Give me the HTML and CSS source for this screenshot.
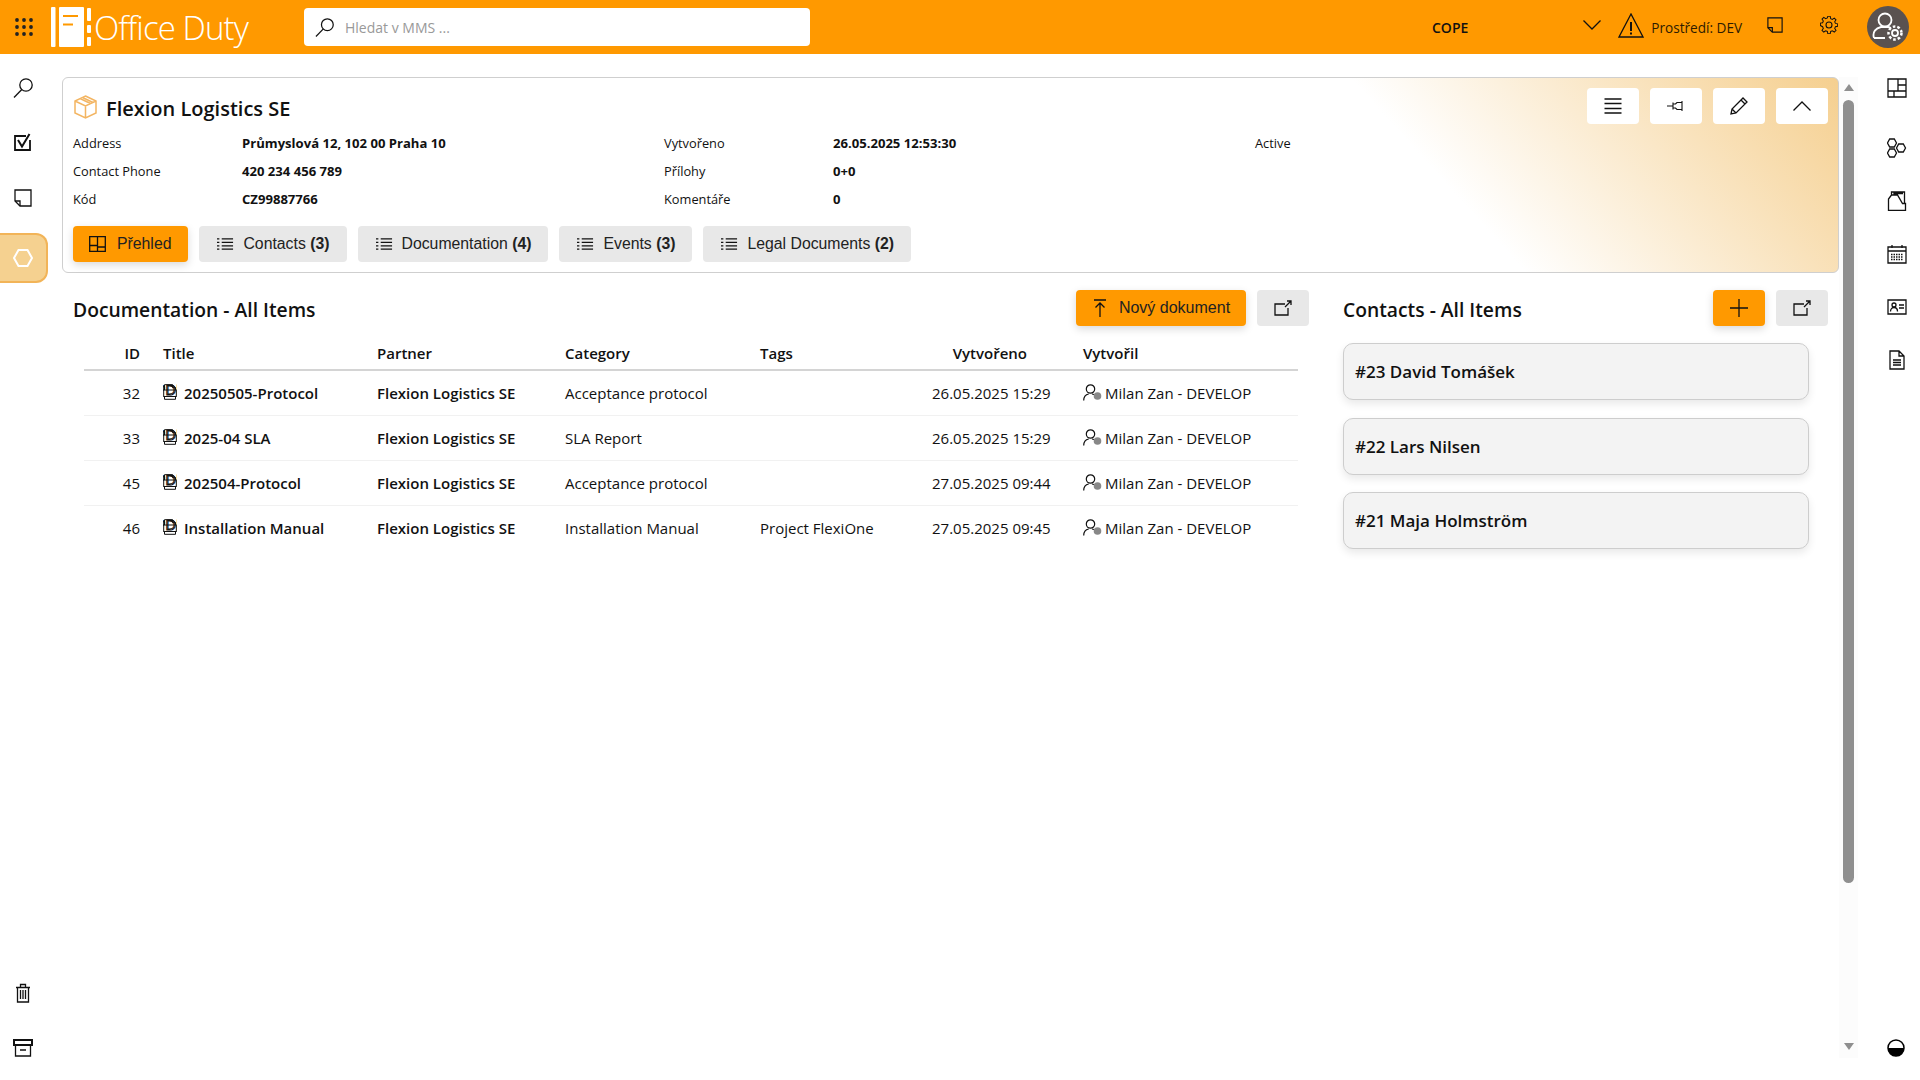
FILE: index.html
```html
<!DOCTYPE html>
<html lang="en">
<head>
    <meta charset="UTF-8">
    <meta name="viewport" content="width=device-width, initial-scale=1.0">
    <title>Office Duty | Flexion Logistics SE</title>
    <link rel="stylesheet" href="styles.css">
</head>
<body>
    <!-- Shared icons -->
    <svg class="sprite" xmlns="http://www.w3.org/2000/svg">
        <symbol id="i-search" viewBox="0 0 20 20"><circle cx="13" cy="7" r="6.2"/><path d="M8.8 11.5 1 19.5"/></symbol>
        <symbol id="i-note" viewBox="0 0 18 18"><path d="M1 1h16v16H6l-5-5z"/><path d="M1 12h5v5"/></symbol>
        <symbol id="i-list" viewBox="0 0 18 14"><path d="M5 1.500h12M5 5.200h12M5 8.900h12M5 12.500h12"/><path d="M0 1.500h2.500M0 5.200h2.500M0 8.900h2.500M0 12.500h2.500"/></symbol>
        <symbol id="i-open" viewBox="0 0 18 16"><path d="M11 4H1v11h13V8"/><path d="M11 7l6-6M13 1h4v4"/></symbol>
        <symbol id="i-pdf" viewBox="0 0 14 16"><path d="M1.500 6V.7h8l3 3V6M1.500 12.500v2.800h11v-2.800"/><path d="M9.500.7v3h3"/><rect x=".7" y="6" width="12.600" height="6.500"/><text x="7" y="11.200" text-anchor="middle">PDF</text></symbol>
        <symbol id="i-user" viewBox="0 0 19 17"><circle cx="7.500" cy="5" r="4.200"/><path d="M.7 16.500c0-4 2.300-6 5-6.500M9 10l2 .5"/><circle class="solid" cx="14.500" cy="12" r="3.800"/></symbol>
    </svg>

    <header class="topbar">
        <svg class="apps" viewBox="0 0 18 18"><g><circle cx="2" cy="2" r="1.900"/><circle cx="9" cy="2" r="1.900"/><circle cx="16" cy="2" r="1.900"/><circle cx="2" cy="9" r="1.900"/><circle cx="9" cy="9" r="1.900"/><circle cx="16" cy="9" r="1.900"/><circle cx="2" cy="16" r="1.900"/><circle cx="9" cy="16" r="1.900"/><circle cx="16" cy="16" r="1.900"/></g></svg>
        <div class="logo">
            <svg class="logo-mark" viewBox="0 0 40 40">
                <rect x="0" y="0" width="4.500" height="40" rx="1" fill="#fff"/>
                <rect x="8" y="0" width="25" height="40" rx="1" fill="#fff"/>
                <rect x="12" y="8" width="15" height="2" fill="#ff9900"/>
                <rect x="12" y="16.500" width="10" height="2" fill="#ff9900"/>
                <rect x="36" y="1" width="4" height="13" rx="1" fill="#fff"/>
                <rect x="36" y="18" width="4" height="8" rx="1" fill="#fff"/>
                <rect x="36" y="30" width="4" height="9" rx="1" fill="#fff"/>
            </svg>
            <span class="logo-text">Office Duty</span>
        </div>
        <div class="search">
            <svg class="ic search-ic"><use href="#i-search"/></svg>
            <span>Hledat v MMS ...</span>
        </div>
        <span class="company">COPE</span>
        <svg class="ic chevron" viewBox="0 0 18 10"><path d="M.5.500 9 9l8.500-8.500"/></svg>
        <svg class="ic warn" viewBox="0 0 26 25"><path d="M13 1 1 24h24z"/><path d="M13 9v9M13 19.500v2" class="thick"/></svg>
        <span class="env">Prostředí: DEV</span>
        <svg class="ic top-note"><use href="#i-note"/></svg>
        <svg class="ic gear" viewBox="0 0 24 24"><path d="M10.300 1h3.400l.6 3.200 2.300 1 2.700-1.800 2.400 2.400-1.800 2.700 1 2.300 3.100.6v3.400l-3.100.6-1 2.300 1.800 2.700-2.400 2.400-2.700-1.800-2.300 1-.6 3.100h-3.400l-.6-3.100-2.300-1-2.700 1.800-2.400-2.400 1.800-2.700-1-2.300L0 13.800v-3.400l3.100-.6 1-2.300-1.800-2.700 2.400-2.400 2.700 1.800 2.300-1z" transform="translate(.5 -.5) scale(.96)"/><circle cx="12" cy="12" r="4"/></svg>
        <div class="avatar">
            <svg class="ic avatar-ic" viewBox="0 0 32 30"><circle cx="13" cy="8" r="6.500"/><path d="M2 26c-2-6 2-10 7-11h7c1 0 2 .500 3 1M2 26h11"/><circle cx="23" cy="21" r="3" /><circle class="gear-ring" cx="23" cy="21" r="6.500"/></svg>
        </div>
    </header>

    <div class="page">
        <nav class="side-left">
            <svg class="ic nav-search"><use href="#i-search"/></svg>
            <svg class="ic nav-check" viewBox="0 0 18 18"><path class="frame" d="M16 7v10H1V3h11"/><path class="thick" d="M4 7l4 6.500L15.500 1"/></svg>
            <svg class="ic nav-note"><use href="#i-note"/></svg>
            <div class="nav-active">
                <svg class="hex" viewBox="0 0 20 18"><path d="M5.500 1h9l4.500 8-4.500 8h-9L1 9z"/></svg>
            </div>
            <svg class="ic nav-trash" viewBox="0 0 16 20"><path d="M1 4.500h14M5.500 4.500V1.500h5v3M2.500 4.500v14.500h11V4.500"/><path d="M5.500 7v9M8 7v9M10.500 7v9"/></svg>
            <svg class="ic nav-box" viewBox="0 0 20 18"><path class="thick" d="M1 1h18v5H1z"/><path d="M2.500 6v11h15V6M7 11h6"/></svg>
        </nav>

        <main class="content">
            <section class="card">
                <div class="card-head">
                    <h1 class="card-title">
                        <svg class="ic box-ic" viewBox="0 0 23 24"><path d="M11.500 1 22 6v12l-10.500 5L1 18V6zM1 6l10.500 5L22 6M11.500 11v12M6 3.500l10.500 5M8.500 2.500l10.500 5"/></svg>
                        Flexion Logistics SE
                    </h1>
                    <div class="card-actions">
                        <button class="btn-white"><svg class="ic" viewBox="0 0 17 16"><path d="M0 1h17M0 5.500h17M0 10.500h17M0 15h17"/></svg></button>
                        <button class="btn-white"><svg class="ic pin" viewBox="0 0 18 12"><path d="M0 6h6M6 2.500v7M6 4h2.500L10 2.500h5v7h-5L8.500 8H6M15 1v10"/></svg></button>
                        <button class="btn-white"><svg class="ic pencil" viewBox="0 0 18 18"><path d="M1 17l1-5L13 1l4 4L6 16zM2 12l4 4M11 3l4 4"/></svg></button>
                        <button class="btn-white"><svg class="ic" viewBox="0 0 18 10"><path d="M.5 9.500 9 1l8.500 8.500"/></svg></button>
                    </div>
                </div>
                <div class="meta">
                    <span>Address</span><b>Průmyslová 12, 102 00 Praha 10</b>
                    <span>Vytvořeno</span><b>26.05.2025 12:53:30</b>
                    <span>Active</span>
                    <span>Contact Phone</span><b>420 234 456 789</b>
                    <span>Přílohy</span><b>0+0</b>
                    <span></span>
                    <span>Kód</span><b>CZ99887766</b>
                    <span>Komentáře</span><b>0</b>
                    <span></span>
                </div>
                <div class="tabs">
                    <button class="tab tab-active"><svg class="ic" viewBox="0 0 17 16"><path d="M.7.700h15.600v14.600H.7zM8.500.700v14.600M.7 9.500h7.800M8.500 11h7.800"/></svg><span>Přehled</span></button>
                    <button class="tab"><svg class="ic"><use href="#i-list"/></svg><span>Contacts <b>(3)</b></span></button>
                    <button class="tab"><svg class="ic"><use href="#i-list"/></svg><span>Documentation <b>(4)</b></span></button>
                    <button class="tab"><svg class="ic"><use href="#i-list"/></svg><span>Events <b>(3)</b></span></button>
                    <button class="tab"><svg class="ic"><use href="#i-list"/></svg><span>Legal Documents <b>(2)</b></span></button>
                </div>
            </section>

            <div class="columns">
                <section class="docs">
                    <div class="section-head">
                        <h2>Documentation - All Items</h2>
                        <button class="btn-orange btn-new"><svg class="ic" viewBox="0 0 12 18"><path d="M0 1h12M6 4v14M1.500 8.500 6 4l4.500 4.500"/></svg>Nový dokument</button>
                        <button class="btn-gray"><svg class="ic"><use href="#i-open"/></svg></button>
                    </div>
                    <table class="doc-table">
                        <colgroup>
                            <col class="c-id"><col class="c-title"><col class="c-partner"><col class="c-cat"><col class="c-tags"><col class="c-date"><col class="c-user">
                        </colgroup>
                        <thead>
                            <tr>
                                <th class="num">ID</th>
                                <th class="title-cell">Title</th>
                                <th>Partner</th>
                                <th>Category</th>
                                <th>Tags</th>
                                <th class="date-head">Vytvořeno</th>
                                <th class="user-cell">Vytvořil</th>
                            </tr>
                        </thead>
                        <tbody>
                            <tr>
                                <td class="num">32</td>
                                <td class="title-cell"><svg class="ic pdf"><use href="#i-pdf"/></svg><b>20250505-Protocol</b></td>
                                <td><b>Flexion Logistics SE</b></td>
                                <td>Acceptance protocol</td>
                                <td></td>
                                <td class="num date">26.05.2025 15:29</td>
                                <td class="user-cell"><svg class="ic user"><use href="#i-user"/></svg>Milan Zan - DEVELOP</td>
                            </tr>
                            <tr>
                                <td class="num">33</td>
                                <td class="title-cell"><svg class="ic pdf"><use href="#i-pdf"/></svg><b>2025-04 SLA</b></td>
                                <td><b>Flexion Logistics SE</b></td>
                                <td>SLA Report</td>
                                <td></td>
                                <td class="num date">26.05.2025 15:29</td>
                                <td class="user-cell"><svg class="ic user"><use href="#i-user"/></svg>Milan Zan - DEVELOP</td>
                            </tr>
                            <tr>
                                <td class="num">45</td>
                                <td class="title-cell"><svg class="ic pdf"><use href="#i-pdf"/></svg><b>202504-Protocol</b></td>
                                <td><b>Flexion Logistics SE</b></td>
                                <td>Acceptance protocol</td>
                                <td></td>
                                <td class="num date">27.05.2025 09:44</td>
                                <td class="user-cell"><svg class="ic user"><use href="#i-user"/></svg>Milan Zan - DEVELOP</td>
                            </tr>
                            <tr>
                                <td class="num">46</td>
                                <td class="title-cell"><svg class="ic pdf"><use href="#i-pdf"/></svg><b>Installation Manual</b></td>
                                <td><b>Flexion Logistics SE</b></td>
                                <td>Installation Manual</td>
                                <td>Project FlexiOne</td>
                                <td class="num date">27.05.2025 09:45</td>
                                <td class="user-cell"><svg class="ic user"><use href="#i-user"/></svg>Milan Zan - DEVELOP</td>
                            </tr>
                        </tbody>
                    </table>
                </section>

                <section class="contacts">
                    <div class="section-head">
                        <h2>Contacts - All Items</h2>
                        <button class="btn-orange btn-plus"><svg class="ic" viewBox="0 0 18 18"><path d="M9 0v18M0 9h18"/></svg></button>
                        <button class="btn-gray"><svg class="ic"><use href="#i-open"/></svg></button>
                    </div>
                    <div class="contact-card">#23 David Tomášek</div>
                    <div class="contact-card">#22 Lars Nilsen</div>
                    <div class="contact-card">#21 Maja Holmström</div>
                </section>
            </div>
        </main>

        <div class="scrollbar">
            <div class="arrow-up"></div>
            <div class="thumb"></div>
            <div class="arrow-down"></div>
        </div>

        <aside class="side-right">
            <svg class="ic" viewBox="0 0 20 20"><path d="M1 1h18v18H1zM11 1v12M11 7h8M1 13h18M7 13v6"/></svg>
            <svg class="ic" viewBox="0 0 20 20"><path d="M2.700 1h4.600l2.200 4-2.200 4H2.700L.5 5zM2.700 11h4.600l2.200 4-2.200 4H2.700L.5 15zM11.700 6h4.600l2.200 4-2.200 4h-4.600L9.500 10z"/></svg>
            <svg class="ic" viewBox="0 0 20 20"><path d="M1.500 19.500V8l3-4h6l5 8.500h3v7zM4.500 4V1h13v11.500M7 4V2.500h9"/></svg>
            <svg class="ic" viewBox="0 0 20 20"><path d="M1 3h18v16H1zM1 7h18M5 1v3M15 1v3"/><path class="dots" d="M4 10.500h12M4 13h12M4 15.500h12"/></svg>
            <svg class="ic card-ic" viewBox="0 0 20 16"><path d="M1 1h18v14H1z"/><circle cx="7" cy="6" r="2"/><path d="M3.500 12.500c0-2.500 1.500-4 3.500-4s3.500 1.500 3.500 4M12 6h5M12 9h5"/></svg>
            <svg class="ic" viewBox="0 0 20 20"><path d="M3 1h9l5 5v13H3zM12 1v5h5M6 10h8M6 12.500h8M6 15h8"/></svg>
            <svg class="half" viewBox="0 0 18 18"><circle cx="9" cy="9" r="8" fill="#fff" stroke="#000" stroke-width="1.500"/><path d="M1 9h16a8 8 0 0 1-16 0z" fill="#000"/></svg>
        </aside>
    </div>
</body>
</html>
```

FILE: styles.css
```css
:root {
    --orange: #ff9900;
    --text: #111;
    --gray-btn: #e8e8e8;
    --line: #d4d4d4;
}

* {
    margin: 0;
    padding: 0;
    box-sizing: border-box;
}

html, body {
    height: 1080px;
    overflow: hidden;
}

body {
    font-family: 'Open Sans', 'Noto Sans', sans-serif;
    font-size: 15px;
    color: var(--text);
    background: #fff;
}

button {
    border: none;
    cursor: pointer;
}

.sprite {
    display: none;
}

.ic {
    fill: none;
    stroke: #111;
    stroke-width: 1.3;
    flex: none;
}

.ic .thick {
    stroke-width: 2;
}

/* Top bar */
.topbar {
    height: 54px;
    background: var(--orange);
    display: flex;
    align-items: center;
}

.apps {
    width: 18px;
    height: 18px;
    margin-left: 15px;
    fill: #222;
}

.logo {
    display: flex;
    align-items: center;
    margin-left: 18px;
    width: 253px;
}

.logo-mark {
    width: 40px;
    height: 40px;
}

.logo-text {
    margin-left: 3px;
    color: #fff;
    font-size: 33px;
    font-weight: 300;
    letter-spacing: -0.9px;
    white-space: nowrap;
}

.search {
    width: 506px;
    height: 38px;
    background: #fff;
    border-radius: 4px;
    display: flex;
    align-items: center;
    padding-left: 11px;
    color: #999;
    font-size: 14px;
}

.search-ic {
    width: 19px;
    height: 19px;
    margin-right: 11px;
}

.company {
    margin-left: 622px;
    font-size: 14px;
    font-weight: 600;
}

.chevron {
    width: 18px;
    height: 10px;
    margin-left: 115px;
    margin-top: -4px;
}

.warn {
    width: 26px;
    height: 25px;
    margin-left: 17px;
    margin-top: -3px;
}

.env {
    margin-left: 7px;
    font-size: 13.6px;
    color: #2e1c00;
    white-space: nowrap;
}

.top-note {
    width: 16px;
    height: 16px;
    margin-left: 25px;
    margin-top: -4px;
}

.gear {
    width: 18px;
    height: 18px;
    margin-left: 37px;
    margin-top: -4px;
    stroke-width: 1.4;
}

.avatar {
    width: 42px;
    height: 42px;
    margin-left: 29px;
    border-radius: 50%;
    background: #5a5250;
    display: flex;
    align-items: center;
    justify-content: center;
}

.avatar-ic {
    width: 32px;
    height: 30px;
    stroke: #fff;
    stroke-width: 1.8;
}

.avatar-ic .gear-ring {
    stroke-width: 2.5;
    stroke-dasharray: 2.6 2;
}

/* Page frame */
.page {
    display: flex;
    height: 1026px;
}

.side-left {
    width: 62px;
    flex: none;
    display: flex;
    flex-direction: column;
    align-items: flex-start;
    padding-top: 24px;
}

.nav-search {
    width: 20px;
    height: 20px;
    margin-left: 13px;
}

.nav-check {
    width: 18px;
    height: 18px;
    margin: 35px 0 0 14px;
}

.nav-check .frame {
    stroke-width: 1.8;
}

.nav-note {
    width: 18px;
    height: 18px;
    margin: 38px 0 0 14px;
}

.nav-active {
    width: 48px;
    height: 50px;
    margin-top: 26px;
    background: #f5d190;
    border: 2px solid #f2b458;
    border-left: none;
    border-radius: 0 12px 12px 0;
    display: flex;
    align-items: center;
    padding-left: 13px;
}

.hex {
    width: 20px;
    height: 18px;
    fill: none;
    stroke: #fff;
    stroke-width: 2;
}

.nav-trash {
    width: 16px;
    height: 20px;
    margin: auto 0 0 15px;
}

.nav-box {
    width: 20px;
    height: 18px;
    margin: 36px 0 23px 13px;
}

.content {
    width: 1777px;
    flex: none;
    padding-top: 23px;
}

/* Header card */
.card {
    height: 196px;
    padding: 0 10px 10px 10px;
    border: 1px solid #cfcfcf;
    border-radius: 6px;
    background: linear-gradient(48deg, #fff 75%, #f5cf8f 100%);
}

.card-head {
    height: 51px;
    display: flex;
    justify-content: space-between;
    padding-top: 10px;
}

.card-title {
    display: flex;
    align-items: center;
    height: 36px;
    margin-top: 2px;
    font-size: 20px;
    font-weight: 600;
}

.box-ic {
    width: 23px;
    height: 24px;
    margin: -3px 9px 0 1px;
    stroke: #f3b562;
    stroke-width: 1.5;
}

.card-actions {
    display: flex;
    gap: 11px;
}

.btn-white {
    width: 52px;
    height: 36px;
    background: #fff;
    border-radius: 4px;
    display: flex;
    align-items: center;
    justify-content: center;
}

.btn-white svg {
    width: 18px;
    height: 16px;
}

.btn-white .pencil {
    height: 18px;
}

.btn-white .pin {
    stroke-width: 1.1;
}

.meta {
    display: grid;
    grid-template-columns: 169px 422px 169px 422px 1fr;
    grid-auto-rows: 28px;
    align-items: center;
    font-size: 12.8px;
}

.meta b {
    font-size: 13.1px;
    font-weight: 700;
}

.tabs {
    display: flex;
    gap: 11px;
    margin-top: 13px;
}

.tab {
    height: 36px;
    padding: 0 17px 0 18px;
    display: flex;
    align-items: center;
    gap: 9px;
    background: var(--gray-btn);
    border-radius: 4px;
    font-family: 'Liberation Sans', Arial, sans-serif;
    font-size: 15.8px;
    color: #222;
    white-space: nowrap;
}

.tab svg {
    width: 17px;
    height: 14px;
}

.tab-active {
    background: var(--orange);
    box-shadow: 0 3px 8px rgba(0, 0, 0, 0.15);
    padding: 0 17px 0 16px;
    gap: 11px;
}

.tab-active svg {
    width: 17px;
    height: 16px;
}

/* Lower columns */
.columns {
    display: flex;
    gap: 34px;
    padding: 17px 11px 0 11px;
}

.docs {
    width: 1236px;
    flex: none;
}

.contacts {
    flex: 1;
}

.section-head {
    height: 36px;
    display: flex;
    align-items: center;
    gap: 11px;
}

.section-head h2 {
    flex: 1;
    padding-top: 2px;
    font-size: 19.3px;
    font-weight: 600;
}

.btn-orange {
    height: 36px;
    background: var(--orange);
    border-radius: 4px;
    box-shadow: 0 3px 8px rgba(0, 0, 0, 0.15);
    display: flex;
    align-items: center;
    justify-content: center;
}

.btn-new {
    width: 170px;
    gap: 13px;
    padding-left: 2px;
    font-family: 'Liberation Sans', Arial, sans-serif;
    font-size: 16px;
    color: #222;
}

.btn-new svg {
    width: 12px;
    height: 18px;
}

.btn-plus {
    width: 52px;
}

.btn-plus svg {
    width: 18px;
    height: 18px;
}

.btn-gray {
    width: 52px;
    height: 36px;
    background: var(--gray-btn);
    border-radius: 4px;
    display: flex;
    align-items: center;
    justify-content: center;
}

.btn-gray svg {
    width: 18px;
    height: 16px;
}

/* Documents table */
.doc-table {
    width: 1214px;
    margin: 10px 0 0 11px;
    table-layout: fixed;
    border-collapse: collapse;
}

.c-id { width: 56px; }
.c-title { width: 237px; }
.c-partner { width: 188px; }
.c-cat { width: 195px; }
.c-tags { width: 172px; }
.c-date { width: 116px; }
.c-user { width: 250px; }

.doc-table th {
    height: 34px;
    text-align: left;
    font-weight: 600;
    font-size: 15px;
    border-bottom: 2px solid var(--line);
}

.doc-table td {
    height: 45px;
    font-size: 15px;
    white-space: nowrap;
    border-bottom: 1px solid #f1f1f1;
}

.doc-table tr:last-child td {
    border-bottom: none;
}

.doc-table b {
    font-weight: 600;
}

.doc-table .num {
    text-align: right;
}

.doc-table .date {
    padding-right: 2px;
}

.doc-table .date-head {
    text-align: right;
    padding-right: 21px;
}

.title-cell {
    padding-left: 23px;
}

.user-cell {
    padding-left: 35px;
}

.pdf {
    width: 14px;
    height: 16px;
    margin-right: 7px;
    vertical-align: -1px;
    stroke-width: 1;
}

.pdf text {
    font-size: 4.5px;
    font-weight: 700;
    stroke: none;
    fill: #111;
}

.user {
    width: 19px;
    height: 17px;
    margin-right: 3px;
    vertical-align: -2px;
    stroke-width: 1.2;
}

.solid {
    fill: #888;
    stroke: none;
}

/* Contact cards */
.contact-card {
    width: 466px;
    height: 57px;
    margin-bottom: 17.5px;
    padding-left: 11px;
    display: flex;
    align-items: center;
    background: #f3f3f3;
    border: 1px solid #cdcdcd;
    border-radius: 10px;
    box-shadow: 0 4px 8px rgba(0, 0, 0, 0.09);
    font-size: 17px;
    font-weight: 600;
}

.section-head + .contact-card {
    margin-top: 17px;
}

/* Scrollbar */
.scrollbar {
    width: 19px;
    flex: none;
    height: 981px;
    margin-top: 23px;
    padding: 7px 4px 8px;
    background: #fcfcfc;
    display: flex;
    flex-direction: column;
    align-items: center;
}

.arrow-up,
.arrow-down {
    width: 0;
    height: 0;
    border-left: 5px solid transparent;
    border-right: 5px solid transparent;
}

.arrow-up {
    border-bottom: 7px solid #8f8f8f;
}

.arrow-down {
    margin-top: auto;
    border-top: 7px solid #8f8f8f;
}

.thumb {
    width: 11px;
    height: 783px;
    margin-top: 9px;
    background: #8f8f8f;
    border-radius: 6px;
}

/* Right rail */
.side-right {
    width: 62px;
    flex: none;
    display: flex;
    flex-direction: column;
    align-items: flex-start;
    padding: 24px 0 23px 29px;
}

.side-right .ic {
    width: 20px;
    height: 20px;
    margin-top: 33px;
}

.side-right .ic:first-child {
    margin-top: 0;
}

.side-right .ic:nth-child(2) {
    margin-top: 40px;
}

.side-right .dots {
    stroke-dasharray: 1.5 1;
}

.half {
    width: 18px;
    height: 18px;
    margin-top: auto;
}
```
